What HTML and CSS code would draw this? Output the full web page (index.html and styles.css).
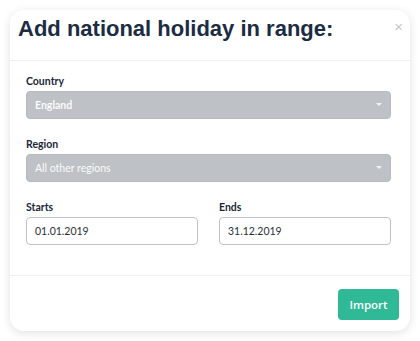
FILE: index.html
```html
<!DOCTYPE html>
<html lang="en">

<head>
    <meta charset="UTF-8">
    <meta name="viewport" content="width=device-width, initial-scale=1.0">
    <title>Add national holiday</title>
    <link rel="stylesheet" href="styles.css">
</head>

<body>

    <div class="modal">
        <div class="modal-header">
            <h1>Add national holiday in range:</h1>
            <button class="close" type="button">&times;</button>
        </div>

        <form class="modal-body">
            <div class="field">
                <label for="country">Country</label>
                <div class="select-wrap">
                    <select id="country" disabled>
                        <option>England</option>
                    </select>
                </div>
            </div>

            <div class="field">
                <label for="region">Region</label>
                <div class="select-wrap">
                    <select id="region" disabled>
                        <option>All other regions</option>
                    </select>
                </div>
            </div>

            <div class="row">
                <div class="field">
                    <label for="starts">Starts</label>
                    <input type="text" id="starts" value="01.01.2019">
                </div>
                <div class="field">
                    <label for="ends">Ends</label>
                    <input type="text" id="ends" value="31.12.2019">
                </div>
            </div>
        </form>

        <div class="modal-footer">
            <button class="btn" type="button">Import</button>
        </div>
    </div>

</body>

</html>
```

FILE: styles.css
```css
body {
    margin: 0;
    padding: 10px;
    background-color: #ffffff;
    font-family: Lato, 'Open Sans', sans-serif;
    color: #333;
}

.modal {
    width: 400px;
    background-color: #fff;
    border-radius: 14px;
    box-shadow: 0 2px 10px rgba(0, 0, 0, 0.12);
}

.modal-header {
    position: relative;
    padding: 6px 8px 18px;
    border-bottom: 1px solid #eceeef;
}

.modal-header h1 {
    margin: 0;
    font-family: 'Liberation Sans', Arial, sans-serif;
    font-size: 22px;
    line-height: 26px;
    font-weight: bold;
    color: #1c2c43;
}

.close {
    position: absolute;
    top: 9px;
    right: 7px;
    border: none;
    background: none;
    padding: 0;
    font-family: 'Liberation Sans', Arial, sans-serif;
    font-size: 15px;
    line-height: 16px;
    color: #c8c8c8;
    cursor: pointer;
}

.modal-body {
    padding: 12px 19px 30px 16px;
    margin: 0;
}

.field {
    display: flex;
    flex-direction: column;
    margin-bottom: 17px;
}

.field label {
    font-size: 10.5px;
    line-height: 16px;
    font-weight: bold;
    color: #1a2838;
    margin-bottom: 2px;
}

.select-wrap {
    position: relative;
}

.select-wrap::after {
    content: "";
    position: absolute;
    right: 9px;
    top: 12px;
    border-left: 3px solid transparent;
    border-right: 3px solid transparent;
    border-top: 3px solid #f2f3f4;
}

.select-wrap select {
    width: 100%;
    height: 28px;
    appearance: none;
    -webkit-appearance: none;
    background-color: #bec2c6;
    border: 1px solid #b6babe;
    border-radius: 4px;
    padding: 0 8px;
    font-family: Lato, sans-serif;
    font-size: 10.5px;
    color: #fafbfb;
    opacity: 1;
}

#country {
    font-weight: bold;
}

.row {
    display: flex;
    gap: 21px;
}

.row .field {
    flex: 1;
    margin-bottom: 0;
}

.row input {
    height: 28px;
    box-sizing: border-box;
    border: 1px solid #bfc3c7;
    border-radius: 4px;
    padding: 0 8px;
    font-family: Lato, sans-serif;
    font-size: 10.5px;
    color: #2a2f35;
}

.modal-footer {
    display: flex;
    justify-content: flex-end;
    padding: 13px 11px 11px;
    border-top: 1px solid #eceeef;
}

.btn {
    width: 61px;
    height: 31px;
    background-color: #2fb996;
    color: #fff;
    border: none;
    border-radius: 4px;
    font-family: 'Open Sans', sans-serif;
    font-size: 11.5px;
    font-weight: 600;
    cursor: pointer;
}
```
